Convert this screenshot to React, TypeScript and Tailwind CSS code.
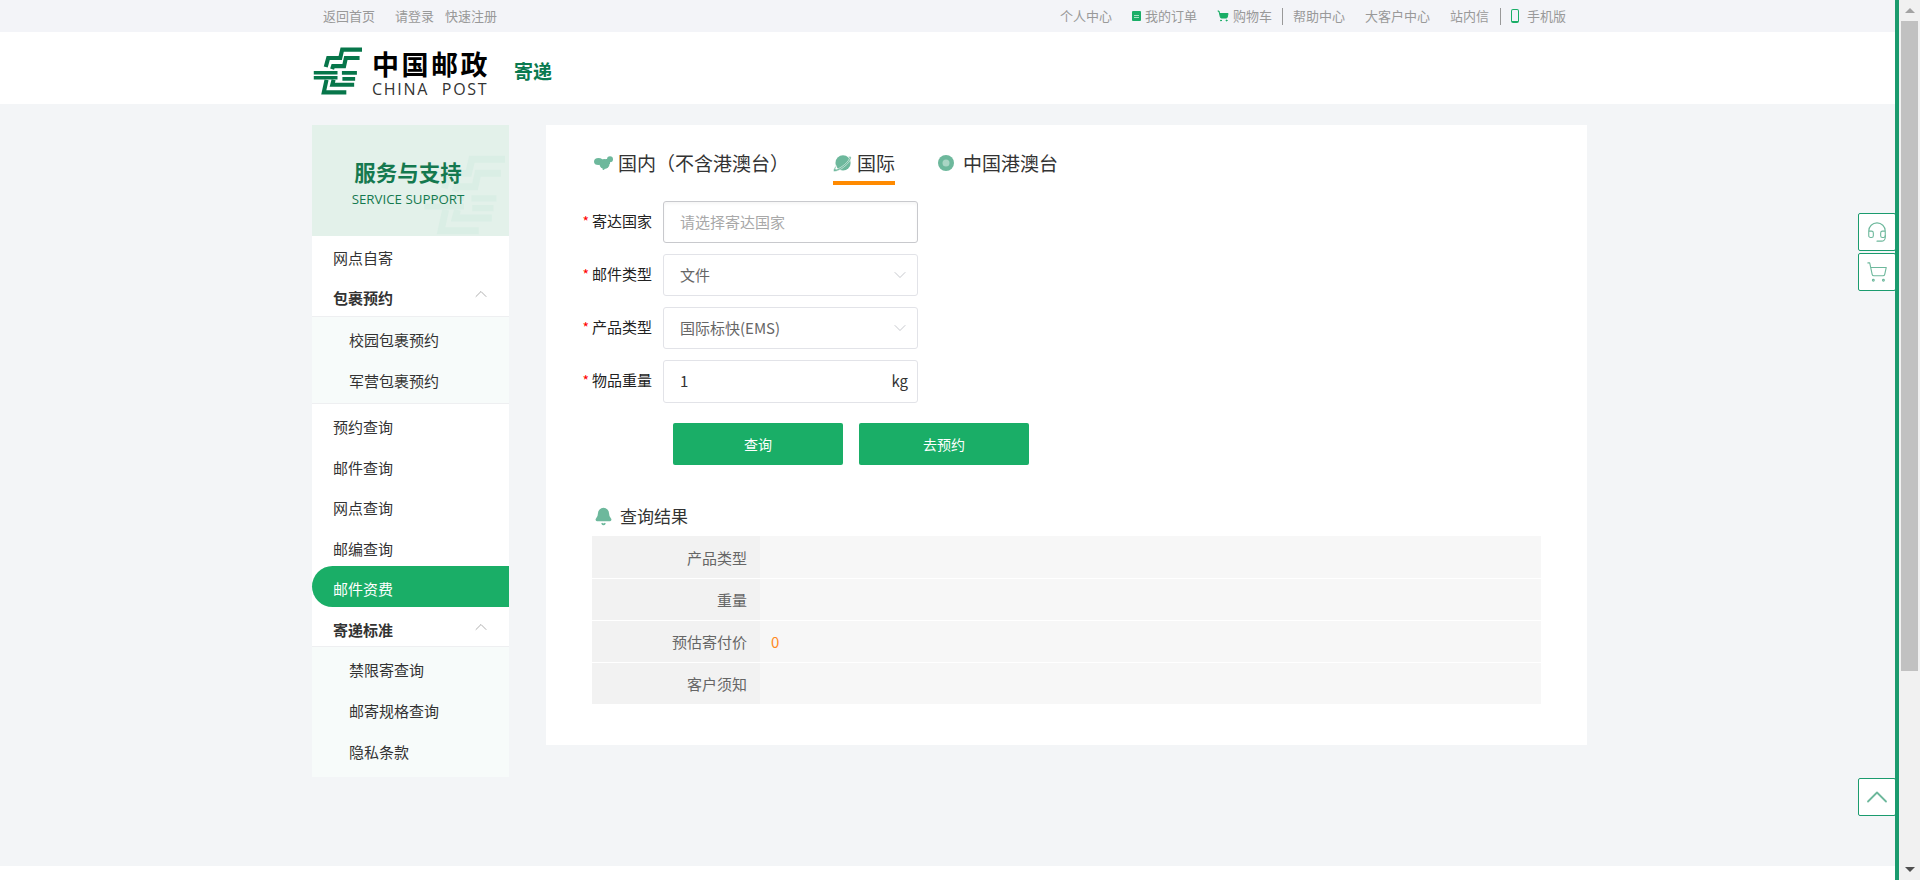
import type { ReactNode } from "react";
import { ChevronDown, ChevronUp, Bell, ShoppingCart, Headset } from "lucide-react";

function Logo({ className, color }: { className?: string; color: string }) {
  return (
    <svg viewBox="0 0 50 48" className={className} fill="none" stroke={color} strokeWidth="4.200">
      <path d="M50 2.200H29.800L27.800 10.700H15.500L13 20" />
      <path d="M47.500 10.700H33.500L31.700 19H20.500L19.500 22" />
      <path d="M.8 25.800H25M.8 31H25" strokeWidth="3.600" />
      <path d="M44.800 26H29.500M43 32H30" strokeWidth="3.800" />
      <path d="M13.800 33L11 45.800H34" />
      <path d="M21 33L19.700 38H42" />
    </svg>
  );
}

function TabIconMap() {
  return (
    <svg viewBox="0 0 19 14" className="w-[19px] h-[14px]" fill="#6db89c">
      <ellipse cx="4.500" cy="5.500" rx="4.500" ry="3.500" />
      <ellipse cx="10.500" cy="8" rx="5" ry="5" />
      <circle cx="16" cy="3.200" r="3" />
      <rect x="12" y="3" width="4" height="5" />
      <circle cx="9.500" cy="13" r="1" />
    </svg>
  );
}

function TabIconPlanet() {
  return (
    <svg viewBox="0 0 18 16" className="w-[19px] h-[17px]" fill="#6db89c">
      <circle cx="9.500" cy="7.500" r="7.200" />
      <path d="M3 10C1 12.500 0 14.500.7 15.300c1 .9 5-.5 9-3.500 4-3 7.500-7 7.500-9.500 0-1-1.500-1.200-3-.5 1 .3 1.500.6 1.300 1.500-.8 2.500-4 5.500-7 7.500-2.500 1.800-5 3-6 2.600-.3-.6.3-1.800 1-3z" stroke="#fff" strokeWidth=".5" />
    </svg>
  );
}

function TabIconCircle() {
  return (
    <svg viewBox="0 0 16 16" className="w-[16px] h-[16px]">
      <circle cx="8" cy="8" r="8" fill="#6db89c" />
      <circle cx="8" cy="8" r="3.500" fill="#a9d5c4" />
    </svg>
  );
}

function NavItem({ children }: { children: string }) {
  return <div className="h-[40.5px] flex items-center pl-[21px] text-[15px] text-[#333]">{children}</div>;
}

function GroupItem({ children, h }: { children: string; h: string }) {
  return (
    <div className={`${h} flex items-center justify-between pl-[21px] pr-[18px] text-[15px] font-bold text-[#333]`}>
      <span>{children}</span>
      <ChevronUp size={20} strokeWidth={0.8} className="text-[#888] -mt-[8px]" />
    </div>
  );
}

function SubItems({ items, pad }: { items: string[]; pad: string }) {
  return (
    <div className={`bg-[#f7fbfa] border-t border-[#eeeff1] ${pad}`}>
      {items.map((t) => (
        <div key={t} className="h-[41px] flex items-center pl-[37px] text-[15px] text-[#333]">
          {t}
        </div>
      ))}
    </div>
  );
}

function FormRow({ label, children }: { label: string; children: ReactNode }) {
  return (
    <div className="flex items-center h-[42px]">
      <label className="w-[72px] flex items-center justify-end pr-[11px] text-[15px] text-[#222] whitespace-nowrap -mt-[1px]">
        <span className="text-[#f00] text-[14px] mr-[3px]">*</span>
        {label}
      </label>
      {children}
    </div>
  );
}

function SelectBox({ value }: { value: string }) {
  return (
    <div className="w-[255px] h-[42px] border border-[#e2e3e8] rounded-[3px] bg-white flex items-center justify-between pl-[16px] pr-[7px] text-[15px] text-[#666]">
      <span>{value}</span>
      <ChevronDown size={20} strokeWidth={0.8} className="text-[#a9acb3]" />
    </div>
  );
}

function ResultRow({ label, value, tall }: { label: string; value?: string; tall?: boolean }) {
  return (
    <div className={`flex text-[15px] ${tall ? "h-[42px]" : "h-[41px]"}`}>
      <div className="w-[168px] bg-[#f2f2f2] flex items-center justify-end pr-[13px] pt-[2px] text-[#666]">{label}</div>
      <div className="flex-1 bg-[#f7f7f7] flex items-center pl-[11px] pt-[2px] text-[#ff8a1f]">{value}</div>
    </div>
  );
}

function FloatBox({ children, className }: { children: ReactNode; className?: string }) {
  return (
    <div className={`w-[38px] h-[38px] border border-[#1a9b6e] rounded-[2px] bg-white flex items-center justify-center ${className ?? ""}`}>
      {children}
    </div>
  );
}

export default function App() {
  return (
    <div className="flex w-full h-[880px] overflow-hidden bg-white" style={{ fontFamily: '"Noto Sans CJK SC", "Noto Sans", sans-serif' }}>
      <div className="relative flex-1 flex flex-col min-w-0">
        {/* top bar */}
        <div className="h-[32px] bg-[#f3f4f8] shrink-0">
          <div className="w-[1275px] mx-auto h-full flex items-center justify-between pl-[11px] pr-[21px] text-[13px] text-[#999]">
            <div className="flex items-center">
              <span>返回首页</span>
              <span className="ml-[20px]">请登录</span>
              <span className="ml-[11px]">快速注册</span>
            </div>
            <div className="flex items-center">
              <span>个人中心</span>
              <span className="ml-[20px] mr-[4px] w-[9px] h-[10px] bg-[#1aae67] rounded-[1px] flex items-center justify-center">
                <span className="w-[5px] h-[3px] border-y border-[#a8e0c4]" />
              </span>
              <span>我的订单</span>
              <ShoppingCart size={12} fill="#1aae67" stroke="#1aae67" className="ml-[20px] mr-[4px]" />
              <span>购物车</span>
              <span className="w-px h-[17px] bg-[#999] ml-[10px] mr-[10px]" />
              <span>帮助中心</span>
              <span className="ml-[20px]">大客户中心</span>
              <span className="ml-[20px]">站内信</span>
              <span className="w-px h-[17px] bg-[#999] ml-[11px] mr-[10px]" />
              <span className="w-[8px] h-[14px] border-[1.500px] border-b-[2.500px] border-[#1aae67] rounded-[2px] mr-[8px]" />
              <span>手机版</span>
            </div>
          </div>
        </div>
        {/* header */}
        <div className="h-[72px] bg-white shrink-0">
          <div className="w-[1275px] mx-auto h-full flex items-start pl-[1px]">
            <Logo className="w-[49px] h-[48px] mt-[15px]" color="#07764a" />
            <div className="ml-[10px] w-[115px] flex flex-col mt-[18px]">
              <span className="text-[27px] leading-[27px] font-bold text-black tracking-[2.500px] whitespace-nowrap">中国邮政</span>
              <span className="mt-[4px] text-[16px] leading-[16px] text-[#333] whitespace-nowrap tracking-[1.700px]" style={{ fontFamily: '"Open Sans", sans-serif', wordSpacing: "7px" }}>CHINA POST</span>
            </div>
            <span className="ml-[27px] mt-[25px] text-[19px] leading-[27px] font-bold text-[#0a7a50]">寄递</span>
          </div>
        </div>
        {/* body */}
        <div className="h-[762px] bg-[#f3f5f7] shrink-0">
          <div className="w-[1275px] mx-auto pt-[21px] flex items-start">
            <aside className="w-[197px] shrink-0 bg-white">
              <div className="relative h-[111px] bg-[#e3f1ea] overflow-hidden flex flex-col items-center pt-[32px] pr-[5px]">
                <Logo className="absolute left-[111px] top-[25px] w-[82px] h-[90px]" color="#daeee5" />
                <span className="relative text-[21.500px] leading-[30px] font-bold text-[#15794f]">服务与支持</span>
                <span className="relative text-[13.300px] leading-[20px] mt-[2px] text-[#15794f]" style={{ fontFamily: '"Open Sans", sans-serif' }}>SERVICE SUPPORT</span>
              </div>
              <div className="pt-[2px]">
                <NavItem>网点自寄</NavItem>
                <GroupItem h="h-[37.500px] pt-[2px]">包裹预约</GroupItem>
                <SubItems items={["校园包裹预约", "军营包裹预约"]} pad="pt-[2.500px] pb-[1.500px] border-b" />
                <div className="pt-[3px]">
                  <NavItem>预约查询</NavItem>
                  <NavItem>邮件查询</NavItem>
                  <NavItem>网点查询</NavItem>
                  <NavItem>邮编查询</NavItem>
                </div>
                <div className="-mt-[3px] h-[41px] pt-[6px] pl-[21px] flex items-center bg-[#1aae67] text-white text-[15px] rounded-l-[21px] relative">邮件资费</div>
                <GroupItem h="h-[39px] pt-[8px]">寄递标准</GroupItem>
                <SubItems items={["禁限寄查询", "邮寄规格查询", "隐私条款"]} pad="pt-[3px] pb-[3.500px]" />
              </div>
            </aside>
            <main className="ml-[37px] w-[1041px] h-[620px] bg-white pl-[46px] pt-[22px]">
              <div className="flex h-[35px] items-start text-[19px] text-[#333]">
                <div className="flex items-center h-[34px] pb-[2px] ml-[2px]">
                  <TabIconMap />
                  <span className="ml-[5px]">国内（不含港澳台）</span>
                </div>
                <div className="ml-[44px] flex items-center h-[38px] pb-[2px] border-b-[4px] border-[#ff8a00]">
                  <TabIconPlanet />
                  <span className="ml-[5px]">国际</span>
                </div>
                <div className="ml-[43px] flex items-center h-[34px] pb-[2px]">
                  <TabIconCircle />
                  <span className="ml-[9px]">中国港澳台</span>
                </div>
              </div>
              <div className="mt-[19px] flex flex-col gap-[11px] -ml-[1px]">
                <FormRow label="寄达国家">
                  <div className="w-[255px] h-[42px] border border-[#c8c9cd] rounded-[3px] bg-white flex items-center pl-[16px] text-[15px] text-[#a8a8a8] shadow-[inset_0_2px_3px_rgba(0,0,0,0.04)]">请选择寄达国家</div>
                </FormRow>
                <FormRow label="邮件类型"><SelectBox value="文件" /></FormRow>
                <FormRow label="产品类型"><SelectBox value="国际标快(EMS)" /></FormRow>
                <FormRow label="物品重量">
                  <div className="w-[255px] h-[43px] border border-[#e2e3e8] rounded-[3px] bg-white flex items-center justify-between pl-[16px] pr-[9px] text-[15px] text-[#333]">
                    <span>1</span>
                    <span>kg</span>
                  </div>
                </FormRow>
              </div>
              <div className="mt-[21px] ml-[81px] flex gap-[16px]">
                <button className="w-[170px] h-[42px] bg-[#1aae67] text-white text-[14px] rounded-[2px]">查询</button>
                <button className="w-[170px] h-[42px] bg-[#1aae67] text-white text-[14px] rounded-[2px]">去预约</button>
              </div>
              <div className="mt-[38px] flex items-center h-[26px] text-[17px] text-[#333]">
                <Bell size={19} fill="#6db89c" stroke="#6db89c" className="ml-[2px] mr-[7px]" />
                <span>查询结果</span>
              </div>
              <div className="mt-[7px] w-[949px] flex flex-col gap-[1px]">
                <ResultRow label="产品类型" tall />
                <ResultRow label="重量" />
                <ResultRow label="预估寄付价" value="0" />
                <ResultRow label="客户须知" />
              </div>
            </main>
          </div>
        </div>
        <div className="flex-1 bg-white" />
        {/* green right edge + floating */}
        <div className="absolute top-0 bottom-0 right-0 w-[4px] bg-[#1a9b6e] z-10" />
        <FloatBox className="absolute right-[3px] top-[213px]">
          <Headset size={22} strokeWidth={1.200} className="text-[#6db89c]" />
        </FloatBox>
        <FloatBox className="absolute right-[3px] top-[253px]">
          <ShoppingCart size={22} strokeWidth={1.200} className="text-[#6db89c]" />
        </FloatBox>
        <FloatBox className="absolute right-[3px] top-[778px]">
          <ChevronUp size={36} strokeWidth={1.200} className="text-[#6db89c] shrink-0" />
        </FloatBox>
      </div>
      {/* scrollbar */}
      <div className="w-[21px] shrink-0 bg-[#f1f1f1] flex flex-col items-center">
        <div className="h-[21px] flex items-center justify-center">
          <span className="w-0 h-0 border-x-[5px] border-x-transparent border-b-[5px] border-b-[#a3a3a3]" />
        </div>
        <div className="w-[17px] h-[650px] bg-[#c1c1c1]" />
        <div className="flex-1" />
        <div className="h-[21px] flex items-center justify-center">
          <span className="w-0 h-0 border-x-[5px] border-x-transparent border-t-[5px] border-t-[#505050]" />
        </div>
      </div>
    </div>
  );
}
